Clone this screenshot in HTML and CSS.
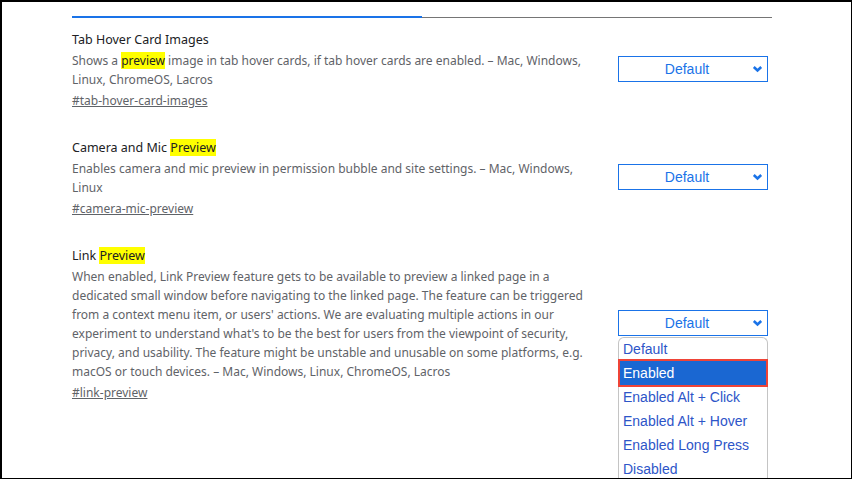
FILE: index.html
```html
<!DOCTYPE html>
<html lang="en">
<head>
  <meta charset="UTF-8">
  <title>Experiments</title>
  <link rel="stylesheet" href="styles.css">
</head>
<body>
  <div class="frame">
    <div class="content">
      <div class="tabs">
        <div class="tab active"></div>
        <div class="tab"></div>
      </div>

      <div class="experiment">
        <div class="info">
          <h3 class="name">Tab Hover Card Images</h3>
          <p class="desc">Shows a <mark>preview</mark> image in tab hover cards, if tab hover cards are enabled. – Mac, Windows, Linux, ChromeOS, Lacros</p>
          <a class="perma" href="#tab-hover-card-images">#tab-hover-card-images</a>
        </div>
        <div class="select">Default<svg class="chev" width="11" height="8" viewBox="0 0 11 8"><path d="M1.8 2 L5.5 5.4 L9.2 2" fill="none" stroke="#1a73e8" stroke-width="2.6"/></svg></div>
      </div>

      <div class="experiment">
        <div class="info">
          <h3 class="name">Camera and Mic <mark>Preview</mark></h3>
          <p class="desc">Enables camera and mic preview in permission bubble and site settings. – Mac, Windows, Linux</p>
          <a class="perma" href="#camera-mic-preview">#camera-mic-preview</a>
        </div>
        <div class="select">Default<svg class="chev" width="11" height="8" viewBox="0 0 11 8"><path d="M1.8 2 L5.5 5.4 L9.2 2" fill="none" stroke="#1a73e8" stroke-width="2.6"/></svg></div>
      </div>

      <div class="experiment">
        <div class="info">
          <h3 class="name">Link <mark>Preview</mark></h3>
          <p class="desc">When enabled, Link Preview feature gets to be available to preview a linked page in a dedicated small window before navigating to the linked page. The feature can be triggered from a context menu item, or users' actions. We are evaluating multiple actions in our experiment to understand what's to be the best for users from the viewpoint of security, privacy, and usability. The feature might be unstable and unusable on some platforms, e.g. macOS or touch devices. – Mac, Windows, Linux, ChromeOS, Lacros</p>
          <a class="perma" href="#link-preview">#link-preview</a>
        </div>
        <div class="select open">Default<svg class="chev" width="11" height="8" viewBox="0 0 11 8"><path d="M1.8 2 L5.5 5.4 L9.2 2" fill="none" stroke="#1a73e8" stroke-width="2.6"/></svg>
          <ul class="options">
            <li class="first">Default</li>
            <li class="selected">Enabled</li>
            <li>Enabled Alt + Click</li>
            <li>Enabled Alt + Hover</li>
            <li>Enabled Long Press</li>
            <li>Disabled</li>
          </ul>
        </div>
      </div>
    </div>
  </div>
</body>
</html>
```

FILE: styles.css
```css
body {
  margin: 0;
  background: #000;
  font-family: 'Noto Sans', 'Open Sans', sans-serif;
}

.frame {
  box-sizing: border-box;
  margin: 2px 1px 1px 2px;
  height: 476px;
  background: #fff;
  overflow: hidden;
}

.content {
  width: 700px;
  margin-left: 70px;
  padding-top: 14px;
}

.tabs {
  display: flex;
  align-items: flex-end;
}

.tab {
  flex: 1;
  height: 1px;
  background: #757575;
}

.tab.active {
  height: 2px;
  background: #1a73e8;
}

.experiment {
  display: flex;
  justify-content: space-between;
  align-items: center;
  margin-top: 12px;
}

.experiment + .experiment {
  margin-top: 28px;
}

.info {
  width: 530px;
}

.name {
  margin: 0;
  font-size: 12.5px;
  font-weight: 400;
  line-height: 20px;
  color: #202124;
}

.desc {
  margin: 1px 0 0;
  font-size: 12px;
  line-height: 19px;
  color: #5f6368;
}

mark {
  background: #ffff00;
  color: #202124;
}

.perma {
  display: block;
  margin-top: 2px;
  font-size: 12px;
  line-height: 19px;
  color: #5f6368;
}

.select {
  position: relative;
  box-sizing: border-box;
  width: 150px;
  height: 26px;
  margin: -2px 4px 0 0;
  border: 1px solid #1a73e8;
  padding-right: 12px;
  font-family: 'Liberation Sans', Arial, sans-serif;
  font-size: 14px;
  line-height: 24px;
  color: #1a73e8;
  text-align: center;
}

.chev {
  position: absolute;
  right: 4px;
  top: 8px;
}

.options {
  position: absolute;
  top: 26px;
  left: -1px;
  width: 150px;
  box-sizing: border-box;
  height: 160px;
  margin: 0;
  padding: 0;
  list-style: none;
  border: 1px solid #c4c4c4;
  border-bottom: none;
  border-radius: 6px 6px 0 0;
  background: #fff;
  text-align: left;
}

.options li {
  height: 24px;
  padding-left: 4px;
  line-height: 24px;
  color: #2d55c8;
}

.options li.first {
  height: 21px;
  line-height: 23px;
}

.options li.selected {
  box-sizing: border-box;
  height: 28px;
  margin: 0 -1px -2px;
  border: 2px solid #ef4437;
  padding-left: 3px;
  line-height: 24px;
  background: #1a67d2;
  color: #fff;
}
```
